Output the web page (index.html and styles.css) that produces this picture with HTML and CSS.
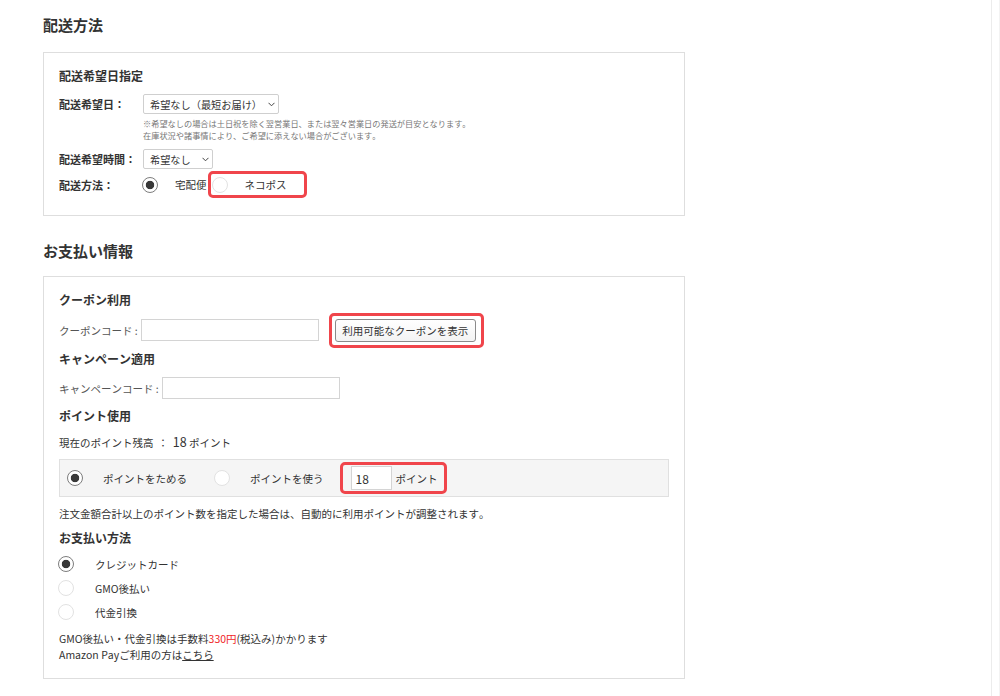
FILE: index.html
```html
<!DOCTYPE html>
<html lang="ja">
<head>
<meta charset="utf-8">
<title>配送方法・お支払い情報</title>
<link rel="stylesheet" href="styles.css">
</head>
<body>
<div class="layout">
  <main class="main">
    <h2 class="sec-title">配送方法</h2>
    <section class="panel panel-delivery">
      <h3 class="sub">配送希望日指定</h3>
      <div class="field field-date">
        <span class="flabel">配送希望日：</span>
        <div class="select select-date">
          <span>希望なし（最短お届け）</span>
          <svg class="chev" width="7" height="5" viewBox="0 0 7 5"><path d="M0.5 0.8 L3.5 3.8 L6.5 0.8" fill="none" stroke="#444" stroke-width="1"/></svg>
        </div>
      </div>
      <p class="note">※希望なしの場合は土日祝を除く翌営業日、または翌々営業日の発送が目安となります。<br>在庫状況や諸事情により、ご希望に添えない場合がございます。</p>
      <div class="field field-time">
        <span class="flabel">配送希望時間：</span>
        <div class="select select-time">
          <span>希望なし</span>
          <svg class="chev" width="7" height="5" viewBox="0 0 7 5"><path d="M0.5 0.8 L3.5 3.8 L6.5 0.8" fill="none" stroke="#444" stroke-width="1"/></svg>
        </div>
      </div>
      <div class="field field-method">
        <span class="flabel">配送方法：</span>
        <span class="radio checked"></span><span class="rlabel rlabel-takkyu">宅配便</span>
        <span class="hl hl-neko"><span class="radio"></span><span class="rlabel">ネコポス</span></span>
      </div>
    </section>

    <h2 class="sec-title sec-pay">お支払い情報</h2>
    <section class="panel panel-pay">
      <h3 class="sub">クーポン利用</h3>
      <div class="code-row coupon-row">
        <span class="clabel">クーポンコード :</span>
        <input class="text-input code-input" type="text">
        <span class="hl hl-btn"><button class="btn" type="button">利用可能なクーポンを表示</button></span>
      </div>
      <h3 class="sub sub-gap">キャンペーン適用</h3>
      <div class="code-row campaign-row">
        <span class="clabel">キャンペーンコード :</span>
        <input class="text-input code-input" type="text">
      </div>
      <h3 class="sub sub-gap2">ポイント使用</h3>
      <p class="balance">現在のポイント残高 <span class="colon">：</span> <span class="num">18</span> ポイント</p>
      <div class="point-box">
        <span class="radio checked"></span><span class="plabel">ポイントをためる</span>
        <span class="radio radio-use"></span><span class="plabel">ポイントを使う</span>
        <span class="hl hl-point"><input class="text-input point-input" type="text" value="18"><span class="punit">ポイント</span></span>
      </div>
      <p class="text">注文金額合計以上のポイント数を指定した場合は、自動的に利用ポイントが調整されます。</p>
      <h3 class="sub sub-pay">お支払い方法</h3>
      <ul class="pay-list">
        <li class="pay-item"><span class="radio checked"></span><span class="paylabel">クレジットカード</span></li>
        <li class="pay-item"><span class="radio"></span><span class="paylabel">GMO後払い</span></li>
        <li class="pay-item"><span class="radio"></span><span class="paylabel">代金引換</span></li>
      </ul>
      <p class="foot">GMO後払い・代金引換は手数料<span class="red">330円</span>(税込み)かかります<br>Amazon Payご利用の方は<a class="link" href="#">こちら</a></p>
    </section>
  </main>
  <div class="edge"></div>
</div>
</body>
</html>
```

FILE: styles.css
```css
html, body {
  margin: 0;
  padding: 0;
  background: #fff;
}
body {
  font-family: "Noto Sans CJK JP", "Noto Sans", sans-serif;
  color: #333;
  font-size: 10.5px;
  font-kerning: none;
  font-feature-settings: "palt" 0, "kern" 0;
}
.layout {
  display: flex;
  min-height: 696px;
}
.main {
  width: 991px;
  box-sizing: border-box;
  padding: 15px 0 0 43px;
}
.edge {
  flex: 1;
  border-left: 1px solid #ececec;
  border-right: 1px solid #f3f3f3;
}
.sec-title {
  margin: 0 0 17px;
  font-size: 15px;
  line-height: 20px;
  font-weight: bold;
  color: #333;
}
.sec-pay {
  margin-top: 25px;
  margin-bottom: 15px;
}
.panel {
  width: 642px;
  box-sizing: border-box;
  border: 1px solid #dedede;
  padding: 14px 15px 15px;
}
.panel-delivery {
  padding-bottom: 17px;
}
.sub {
  margin: 0;
  font-size: 12px;
  line-height: 18px;
  font-weight: bold;
  color: #333;
}
.field {
  display: flex;
  align-items: center;
}
.flabel {
  width: 84px;
  flex: none;
  font-size: 11px;
  font-weight: bold;
  color: #333;
}
.field-date {
  margin-top: 9px;
  height: 20px;
}
.field-time {
  margin-top: 8px;
  height: 20px;
}
.field-method {
  margin-top: 2px;
  height: 27px;
}
.select {
  box-sizing: border-box;
  height: 20px;
  border: 1px solid #cfcfcf;
  border-radius: 2px;
  background: #fff;
  display: flex;
  align-items: center;
  justify-content: space-between;
  padding: 0 3px 0 6px;
  font-size: 10.2px;
  color: #333;
}
.select-date {
  width: 136px;
}
.select-time {
  width: 70px;
}
.chev {
  display: block;
}
.note {
  margin: 3px 0 0 84px;
  font-size: 8.2px;
  line-height: 12px;
  color: #777;
}
.radio {
  display: inline-block;
  flex: none;
  width: 16px;
  height: 16px;
  box-sizing: border-box;
  border-radius: 50%;
  border: 1px solid #e2e2e2;
  background: #fff;
}
.radio.checked {
  border: 1.5px solid #7d7d7d;
  background: radial-gradient(circle, #383838 0, #383838 3.8px, #fff 4.6px);
}
.field-method .radio {
  margin-left: -1px;
}
.rlabel {
  margin-left: 17px;
  font-size: 10.5px;
  color: #333;
}
.rlabel-takkyu {
  margin-right: 1px;
}
.hl {
  display: inline-flex;
  align-items: center;
  box-sizing: border-box;
  border: 3px solid #f0454b;
  border-radius: 5px;
}
.hl-neko {
  height: 27px;
  padding: 0 17px 0 2px;
}
.code-row {
  display: flex;
  align-items: center;
  height: 22px;
}
.coupon-row {
  margin-top: 10px;
}
.campaign-row {
  margin-top: 9px;
}
.clabel {
  font-size: 10.5px;
  color: #555;
  margin-right: 3px;
}
.text-input {
  box-sizing: border-box;
  border: 1px solid #d4d4d4;
  background: #fff;
  margin: 0;
  padding: 0 4px;
  font-family: "Noto Sans CJK JP", "Noto Sans", sans-serif;
  outline: none;
}
.code-input {
  width: 178px;
  height: 22px;
}
.hl-btn {
  height: 35px;
  margin: -6px 0 -7px 10px;
  padding: 0 5px 0 3px;
}
.btn {
  width: 141px;
  height: 23px;
  box-sizing: border-box;
  border: 1px solid #8a8a8a;
  border-radius: 3px;
  background: linear-gradient(#ffffff, #f3f3f3);
  font-family: "Noto Sans CJK JP", "Noto Sans", sans-serif;
  font-size: 10.5px;
  color: #333;
  padding: 0;
  cursor: pointer;
}
.sub-gap {
  margin-top: 9px;
}
.sub-gap2 {
  margin-top: 8px;
}
.balance {
  margin: 8px 0 0;
  font-size: 10.5px;
  line-height: 18px;
  color: #333;
}
.colon {
  margin: 0 2px;
}
.num {
  font-size: 12.5px;
}
.point-box {
  margin-top: 7px;
  height: 38px;
  box-sizing: border-box;
  border: 1px solid #e0e0e0;
  background: #f5f5f5;
  display: flex;
  align-items: center;
  padding-left: 7px;
}
.plabel {
  margin-left: 20px;
  font-size: 10.5px;
  color: #333;
}
.radio-use {
  margin-left: 27px;
}
.hl-point {
  margin-left: 16px;
  height: 32px;
  padding: 0 6px 0 8px;
}
.point-input {
  width: 41px;
  height: 24px;
  font-size: 12px;
  color: #333;
}
.punit {
  margin-left: 4px;
  font-size: 10.5px;
  color: #333;
}
.text {
  margin: 8px 0 0;
  font-size: 10.5px;
  line-height: 18px;
  color: #333;
}
.sub-pay {
  margin-top: 6px;
}
.pay-list {
  list-style: none;
  margin: 5px 0 0;
  padding: 0;
}
.pay-item {
  height: 24px;
  display: flex;
  align-items: center;
}
.pay-item .radio {
  margin-left: -1px;
}
.paylabel {
  display: block;
  flex: none;
  margin-left: 21px;
  font-size: 10.5px;
  color: #333;
  white-space: nowrap;
}
.foot {
  margin: 7px 0 0;
  font-size: 10.5px;
  line-height: 16px;
  color: #333;
}
.red {
  color: #f01e1e;
}
.link {
  color: #333;
  text-decoration: underline;
}
```
